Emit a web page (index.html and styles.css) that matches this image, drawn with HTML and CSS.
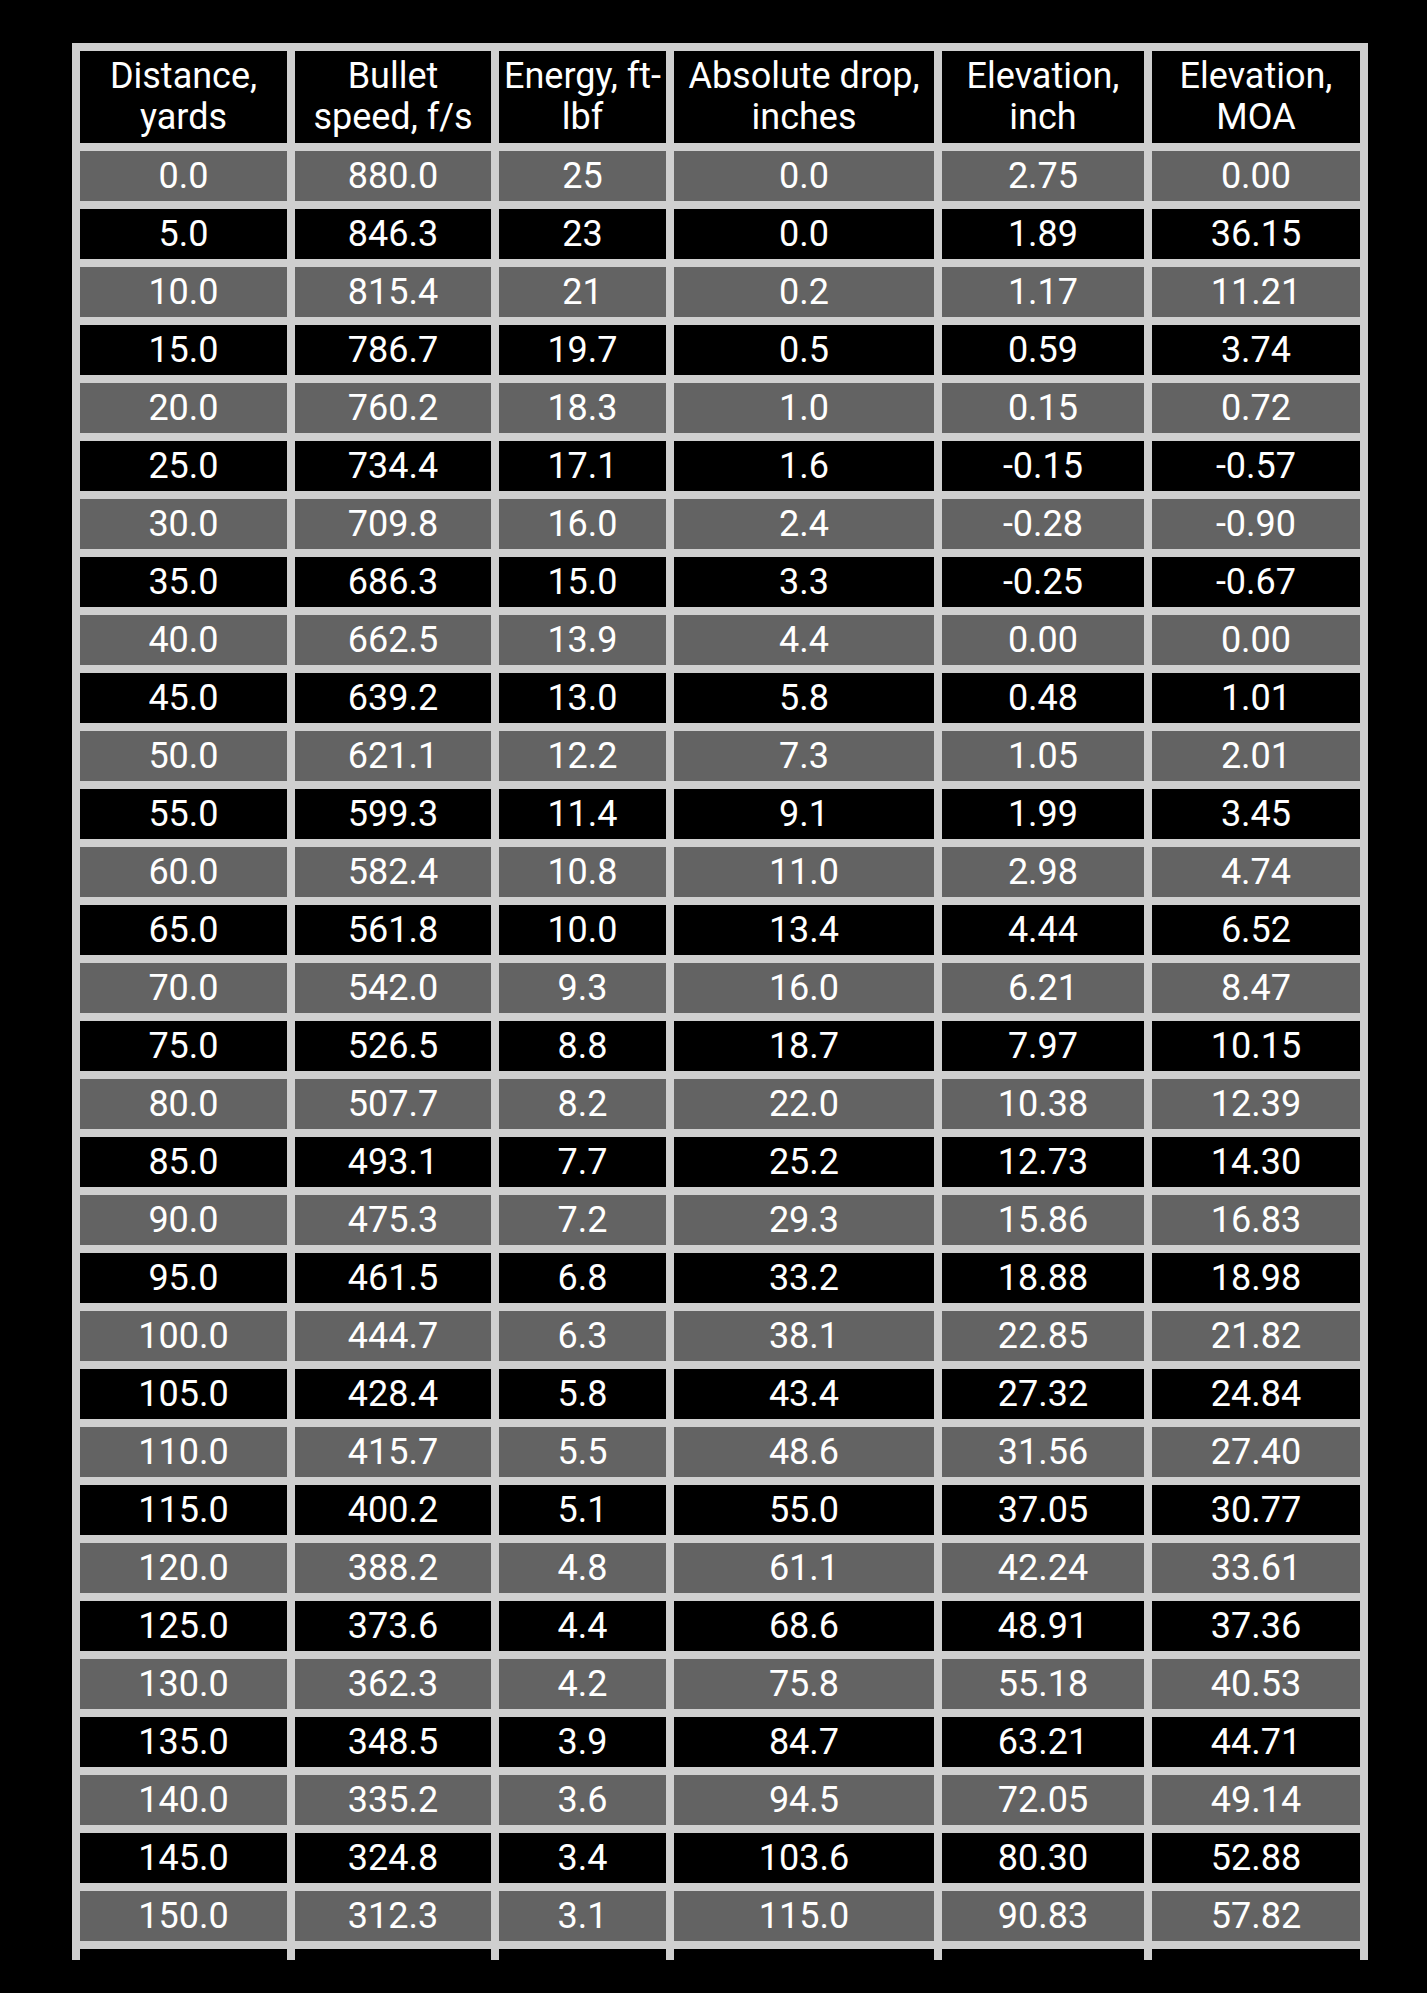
FILE: index.html
```html
<!DOCTYPE html>
<html lang="en">
<head>
<meta charset="utf-8">
<title>Ballistic table</title>
<link rel="stylesheet" href="styles.css">
</head>
<body>
<div class="page">
  <div class="clip">
    <table class="ballistics">
      <colgroup>
        <col class="c1"><col class="c2"><col class="c3"><col class="c4"><col class="c5"><col class="c6">
      </colgroup>
      <thead>
        <tr>
          <th>Distance, yards</th>
          <th>Bullet speed, f/s</th>
          <th>Energy, ft-lbf</th>
          <th>Absolute drop, inches</th>
          <th>Elevation, inch</th>
          <th>Elevation, MOA</th>
        </tr>
      </thead>
      <tbody>
        <tr><td>0.0</td><td>880.0</td><td>25</td><td>0.0</td><td>2.75</td><td>0.00</td></tr>
        <tr><td>5.0</td><td>846.3</td><td>23</td><td>0.0</td><td>1.89</td><td>36.15</td></tr>
        <tr><td>10.0</td><td>815.4</td><td>21</td><td>0.2</td><td>1.17</td><td>11.21</td></tr>
        <tr><td>15.0</td><td>786.7</td><td>19.7</td><td>0.5</td><td>0.59</td><td>3.74</td></tr>
        <tr><td>20.0</td><td>760.2</td><td>18.3</td><td>1.0</td><td>0.15</td><td>0.72</td></tr>
        <tr><td>25.0</td><td>734.4</td><td>17.1</td><td>1.6</td><td>-0.15</td><td>-0.57</td></tr>
        <tr><td>30.0</td><td>709.8</td><td>16.0</td><td>2.4</td><td>-0.28</td><td>-0.90</td></tr>
        <tr><td>35.0</td><td>686.3</td><td>15.0</td><td>3.3</td><td>-0.25</td><td>-0.67</td></tr>
        <tr><td>40.0</td><td>662.5</td><td>13.9</td><td>4.4</td><td>0.00</td><td>0.00</td></tr>
        <tr><td>45.0</td><td>639.2</td><td>13.0</td><td>5.8</td><td>0.48</td><td>1.01</td></tr>
        <tr><td>50.0</td><td>621.1</td><td>12.2</td><td>7.3</td><td>1.05</td><td>2.01</td></tr>
        <tr><td>55.0</td><td>599.3</td><td>11.4</td><td>9.1</td><td>1.99</td><td>3.45</td></tr>
        <tr><td>60.0</td><td>582.4</td><td>10.8</td><td>11.0</td><td>2.98</td><td>4.74</td></tr>
        <tr><td>65.0</td><td>561.8</td><td>10.0</td><td>13.4</td><td>4.44</td><td>6.52</td></tr>
        <tr><td>70.0</td><td>542.0</td><td>9.3</td><td>16.0</td><td>6.21</td><td>8.47</td></tr>
        <tr><td>75.0</td><td>526.5</td><td>8.8</td><td>18.7</td><td>7.97</td><td>10.15</td></tr>
        <tr><td>80.0</td><td>507.7</td><td>8.2</td><td>22.0</td><td>10.38</td><td>12.39</td></tr>
        <tr><td>85.0</td><td>493.1</td><td>7.7</td><td>25.2</td><td>12.73</td><td>14.30</td></tr>
        <tr><td>90.0</td><td>475.3</td><td>7.2</td><td>29.3</td><td>15.86</td><td>16.83</td></tr>
        <tr><td>95.0</td><td>461.5</td><td>6.8</td><td>33.2</td><td>18.88</td><td>18.98</td></tr>
        <tr><td>100.0</td><td>444.7</td><td>6.3</td><td>38.1</td><td>22.85</td><td>21.82</td></tr>
        <tr><td>105.0</td><td>428.4</td><td>5.8</td><td>43.4</td><td>27.32</td><td>24.84</td></tr>
        <tr><td>110.0</td><td>415.7</td><td>5.5</td><td>48.6</td><td>31.56</td><td>27.40</td></tr>
        <tr><td>115.0</td><td>400.2</td><td>5.1</td><td>55.0</td><td>37.05</td><td>30.77</td></tr>
        <tr><td>120.0</td><td>388.2</td><td>4.8</td><td>61.1</td><td>42.24</td><td>33.61</td></tr>
        <tr><td>125.0</td><td>373.6</td><td>4.4</td><td>68.6</td><td>48.91</td><td>37.36</td></tr>
        <tr><td>130.0</td><td>362.3</td><td>4.2</td><td>75.8</td><td>55.18</td><td>40.53</td></tr>
        <tr><td>135.0</td><td>348.5</td><td>3.9</td><td>84.7</td><td>63.21</td><td>44.71</td></tr>
        <tr><td>140.0</td><td>335.2</td><td>3.6</td><td>94.5</td><td>72.05</td><td>49.14</td></tr>
        <tr><td>145.0</td><td>324.8</td><td>3.4</td><td>103.6</td><td>80.30</td><td>52.88</td></tr>
        <tr><td>150.0</td><td>312.3</td><td>3.1</td><td>115.0</td><td>90.83</td><td>57.82</td></tr>
        <tr class="cut"><td></td><td></td><td></td><td></td><td></td><td></td></tr>
      </tbody>
    </table>
  </div>
</div>
</body>
</html>
```

FILE: styles.css
```css
html, body {
  margin: 0;
  padding: 0;
  background: #000000;
}

body {
  font-family: Roboto, "Liberation Sans", Arial, sans-serif;
  color: #ffffff;
}

.page {
  padding: 43px 0 0 72px;
}

.clip {
  width: 1296px;
  height: 1917px;
  overflow: hidden;
}

.ballistics {
  width: 1296px;
  table-layout: fixed;
  border-collapse: separate;
  border-spacing: 8px;
  background: #cfcfcf;
  margin: 0;
}

.c1 { width: 207px; }
.c2 { width: 196px; }
.c3 { width: 167px; }
.c4 { width: 260px; }
.c5 { width: 202px; }
.c6 { width: 208px; }

.ballistics th,
.ballistics td {
  padding: 0;
  text-align: center;
  vertical-align: middle;
  font-size: 36px;
  line-height: 41px;
  font-weight: 400;
  color: #ffffff;
  background: #000000;
}

.ballistics th {
  height: 92px;
}

.ballistics td {
  height: 50px;
}

.ballistics tbody tr:nth-child(odd) td {
  background: #636363;
}

.ballistics tbody tr.cut td {
  background: #000000;
}
```
